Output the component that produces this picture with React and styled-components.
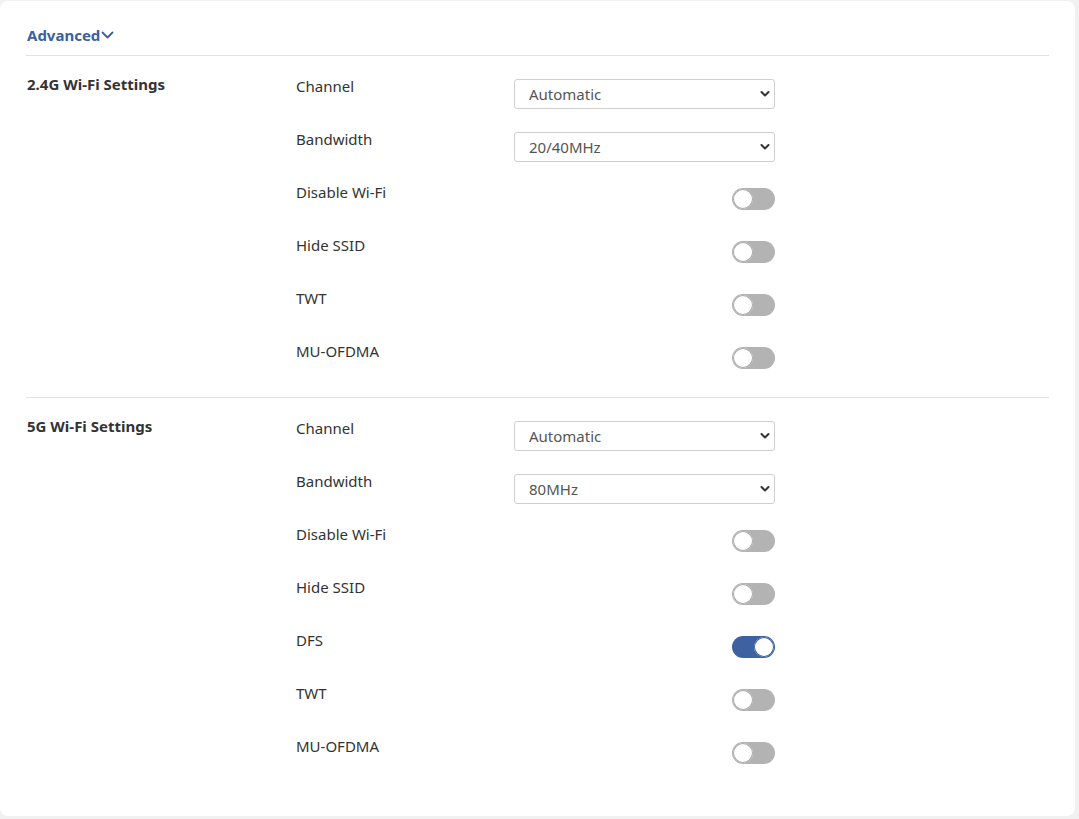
import React, { useState } from "react";
import styled, { createGlobalStyle } from "styled-components";

const Global = createGlobalStyle`
  html, body { margin: 0; padding: 0; background: #f1f1f1; }
  body { font-family: "Noto Sans", "Open Sans", sans-serif; color: #333; }
  * { box-sizing: border-box; }
`;

const Page = styled.div`
  padding: 1px 4px 3px 0;
  min-height: 819px;
`;

const Card = styled.div`
  background: #fff;
  border-radius: 8px;
  padding: 0 26px 24px 26px;
  height: 815px;
`;

const Header = styled.div`
  height: 55px;
  padding: 23px 0 0 1px;
  border-bottom: 1px solid #e2e2e2;
`;

const AdvancedLink = styled.button`
  all: unset;
  cursor: pointer;
  display: inline-flex;
  align-items: center;
  gap: 1px;
  color: #3c5f9e;
  font-weight: 700;
  font-size: 15px;
  line-height: 20px;
`;

const Section = styled.section`
  display: grid;
  grid-template-columns: 269px 1fr;
  padding: 23px 0 0 1px;
  border-bottom: ${(p) => (p.$last ? "none" : "1px solid #e2e2e2")};
`;

const SectionTitle = styled.h3`
  margin: 0;
  font-size: 15px;
  font-weight: 700;
  line-height: 11px;
  color: #333;
`;

const Rows = styled.div`
  display: flex;
  flex-direction: column;
`;

const Row = styled.div`
  display: grid;
  grid-template-columns: 218px 261px;
  height: 30px;
  margin-bottom: 23px;
`;

const Label = styled.div`
  font-size: 15px;
  line-height: 14px;
  color: #333;
`;

const SelectWrap = styled.div`
  position: relative;
  width: 261px;
  height: 30px;
`;

const Select = styled.select`
  appearance: none;
  -webkit-appearance: none;
  width: 100%;
  height: 100%;
  border: 1px solid #cfcfcf;
  border-radius: 3px;
  background: #fff;
  padding: 0 30px 0 14px;
  font-family: inherit;
  font-size: 15px;
  color: #555;
  outline: none;
`;

const Chevron = styled.svg`
  position: absolute;
  right: 5px;
  top: 11px;
  pointer-events: none;
`;

const ToggleCell = styled.div`
  display: flex;
  justify-content: flex-end;
  padding-top: 3px;
`;

const Toggle = styled.button`
  all: unset;
  cursor: pointer;
  position: relative;
  width: 43px;
  height: 22px;
  border-radius: 11px;
  background: ${(p) => (p.$on ? "#3d629f" : "#b3b3b3")};
`;

const Knob = styled.span`
  position: absolute;
  top: 1px;
  left: ${(p) => (p.$on ? "22px" : "1px")};
  width: 20px;
  height: 20px;
  border-radius: 50%;
  background: #fff;
  box-shadow: 0 0 0 1px ${(p) => (p.$on ? "#3d629f" : "#a8a8a8")} inset;
`;

function SelectField({ value, options }) {
  return (
    <SelectWrap>
      <Select defaultValue={value}>
        {options.map((o) => (
          <option key={o}>{o}</option>
        ))}
      </Select>
      <Chevron width="10" height="8" viewBox="0 0 10 8">
        <path d="M1.5 2 L5 5.5 L8.5 2" fill="none" stroke="#333" strokeWidth="2" strokeLinecap="round" strokeLinejoin="round" />
      </Chevron>
    </SelectWrap>
  );
}

function Switch({ initial }) {
  const [on, setOn] = useState(!!initial);
  return (
    <ToggleCell>
      <Toggle $on={on} onClick={() => setOn(!on)}>
        <Knob $on={on} />
      </Toggle>
    </ToggleCell>
  );
}

const sections = [
  {
    title: "2.4G Wi-Fi Settings",
    rows: [
      { label: "Channel", select: "Automatic", options: ["Automatic", "1", "6", "11"] },
      { label: "Bandwidth", select: "20/40MHz", options: ["20MHz", "40MHz", "20/40MHz"] },
      { label: "Disable Wi-Fi" },
      { label: "Hide SSID" },
      { label: "TWT" },
      { label: "MU-OFDMA" },
    ],
  },
  {
    title: "5G Wi-Fi Settings",
    rows: [
      { label: "Channel", select: "Automatic", options: ["Automatic", "36", "40", "44", "48"] },
      { label: "Bandwidth", select: "80MHz", options: ["20MHz", "40MHz", "80MHz"] },
      { label: "Disable Wi-Fi" },
      { label: "Hide SSID" },
      { label: "DFS", on: true },
      { label: "TWT" },
      { label: "MU-OFDMA" },
    ],
  },
];

export default function App() {
  return (
    <>
      <Global />
      <Page>
        <Card>
          <Header>
            <AdvancedLink>
              Advanced
              <svg width="13" height="10" viewBox="0 0 13 10">
                <path d="M1.5 2.5 L6.5 7.5 L11.5 2.5" fill="none" stroke="#3c5f9e" strokeWidth="1.8" strokeLinecap="round" strokeLinejoin="round" />
              </svg>
            </AdvancedLink>
          </Header>
          {sections.map((s, i) => (
            <Section key={s.title} $last={i === sections.length - 1}>
              <SectionTitle>{s.title}</SectionTitle>
              <Rows>
                {s.rows.map((r) => (
                  <Row key={r.label}>
                    <Label>{r.label}</Label>
                    {r.select ? (
                      <SelectField value={r.select} options={r.options} />
                    ) : (
                      <Switch initial={r.on} />
                    )}
                  </Row>
                ))}
              </Rows>
            </Section>
          ))}
        </Card>
      </Page>
    </>
  );
}
